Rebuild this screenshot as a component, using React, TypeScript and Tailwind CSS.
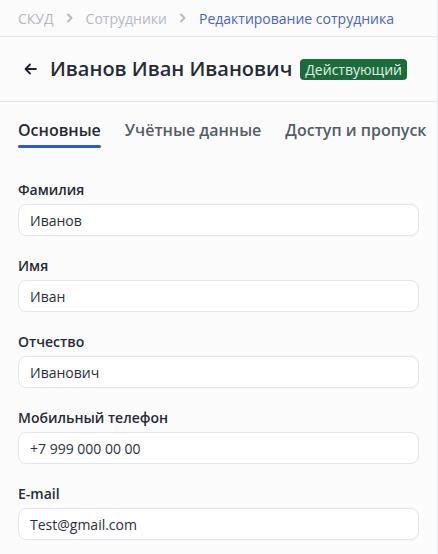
import React from 'react';

const fields = [
  { label: 'Фамилия', value: 'Иванов' },
  { label: 'Имя', value: 'Иван' },
  { label: 'Отчество', value: 'Иванович' },
  { label: 'Мобильный телефон', value: '+7 999 000 00 00' },
  { label: 'E-mail', value: 'Test@gmail.com' },
];

const Chevron = () => (
  <svg width="10" height="10" viewBox="0 0 10 10" fill="none" className="mx-[11px] shrink-0">
    <path d="M3 1.5 6.5 5 3 8.5" stroke="#b6bac2" strokeWidth="2" strokeLinecap="round" strokeLinejoin="round" />
  </svg>
);

const App: React.FC = () => {
  return (
    <div className="min-h-[554px] w-[438px] overflow-hidden bg-[#fbfbfc] font-['Open_Sans',sans-serif] text-[#1f2430] border-r border-[#e6e7ea]">
      {/* Breadcrumbs */}
      <div className="flex h-[37px] items-center whitespace-nowrap px-[18px] text-[14px] border-b border-[#e6e7ea]">
        <span className="text-[#b5b9c1]">СКУД</span>
        <Chevron />
        <span className="text-[#b5b9c1]">Сотрудники</span>
        <Chevron />
        <span className="text-[#4a62c9]">Редактирование сотрудника</span>
      </div>

      {/* Header */}
      <div className="flex h-[65px] items-center whitespace-nowrap pl-[24px] border-b border-[#e6e7ea]">
        <svg width="13" height="12" viewBox="0 0 13 12" fill="none" className="shrink-0">
          <path d="M12 6H1.5M6 1.5 1.5 6 6 10.5" stroke="#1f2430" strokeWidth="1.8" strokeLinecap="round" strokeLinejoin="round" />
        </svg>
        <h1 className="ml-[13px] text-[20px] font-semibold leading-[28px] text-[#262a35]">Иванов Иван Иванович</h1>
        <span className="ml-[8px] rounded-[4px] bg-[#1c6b3b] px-[5px] text-[14px] leading-[21px] text-[#e3f2e6]">Действующий</span>
      </div>

      {/* Tabs */}
      <div className="flex gap-[24px] whitespace-nowrap px-[18px] pt-[16px]">
        <div className="flex flex-col">
          <span className="text-[16px] font-semibold leading-[24px] text-[#262a35]">Основные</span>
          <span className="mt-[3px] h-[3px] rounded-full bg-[#2b5bc8]" />
        </div>
        <span className="text-[16px] font-semibold leading-[24px] text-[#555b66]">Учётные данные</span>
        <span className="text-[16px] font-semibold leading-[24px] text-[#555b66]">Доступ и пропуск</span>
      </div>

      {/* Form */}
      <div className="flex flex-col gap-[20px] px-[18px] pt-[32px]">
        {fields.map(f => (
          <div key={f.label} className="flex flex-col gap-[4px]">
            <label className="text-[14px] font-semibold leading-[20px] text-[#262a35]">{f.label}</label>
            <div className="flex h-[32px] items-center rounded-[8px] border border-[#e3e5ea] bg-white px-[11px] text-[14px] text-[#2a2f3a]">
              {f.value}
            </div>
          </div>
        ))}
      </div>
    </div>
  );
};

export default App;
